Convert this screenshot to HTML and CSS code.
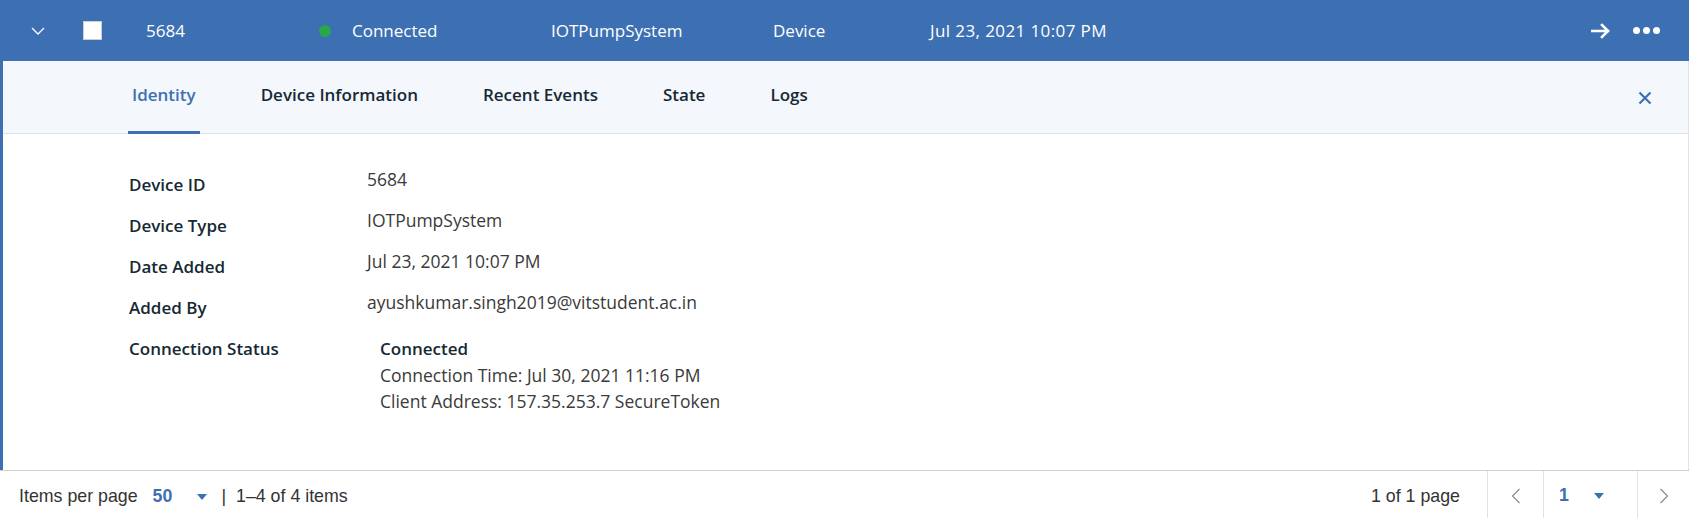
FILE: index.html
```html
<!DOCTYPE html>
<html lang="en">
<head>
<meta charset="utf-8">
<title>Device 5684</title>
<link rel="stylesheet" href="styles.css">
</head>
<body>
<div class="table">
  <div class="row-head">
    <div class="cell cell-expand">
      <svg class="chev" width="14" height="8" viewBox="0 0 14 8"><path d="M1 1l6 6 6-6" fill="none" stroke="#fff" stroke-width="1.3"/></svg>
    </div>
    <div class="cell cell-check"><span class="checkbox"></span></div>
    <div class="cell cell-id">5684</div>
    <div class="cell cell-status"><span class="dot"></span>Connected</div>
    <div class="cell cell-type">IOTPumpSystem</div>
    <div class="cell cell-class">Device</div>
    <div class="cell cell-date">Jul 23, 2021 10:07 PM</div>
    <div class="cell cell-actions">
      <svg class="arrow" width="20" height="16" viewBox="0 0 20 16"><path d="M1 8h16M11 2l6 6-6 6" fill="none" stroke="#fff" stroke-width="2.6" stroke-linecap="square"/></svg>
      <span class="dots"><i></i><i></i><i></i></span>
    </div>
  </div>
  <div class="expanded">
    <div class="tabs">
      <nav class="tab-list">
        <a class="tab tab-active">Identity</a>
        <a class="tab">Device Information</a>
        <a class="tab">Recent Events</a>
        <a class="tab">State</a>
        <a class="tab">Logs</a>
      </nav>
      <svg class="close" width="14" height="14" viewBox="0 0 14 14"><path d="M1.5 1.5l11 11M12.5 1.5l-11 11" stroke="#3d70b2" stroke-width="2.2"/></svg>
    </div>
    <div class="details">
      <div class="drow"><div class="dlabel">Device ID</div><div class="dvalue">5684</div></div>
      <div class="drow"><div class="dlabel">Device Type</div><div class="dvalue">IOTPumpSystem</div></div>
      <div class="drow"><div class="dlabel">Date Added</div><div class="dvalue">Jul 23, 2021 10:07 PM</div></div>
      <div class="drow"><div class="dlabel">Added By</div><div class="dvalue">ayushkumar.singh2019@vitstudent.ac.in</div></div>
      <div class="drow"><div class="dlabel">Connection Status</div>
        <div class="dvalue dvalue-status">
          <div class="status-main">Connected</div>
          <div>Connection Time: Jul 30, 2021 11:16 PM</div>
          <div>Client Address: 157.35.253.7 SecureToken</div>
        </div>
      </div>
    </div>
  </div>
  <div class="pager">
    <div class="pager-left">
      <span>Items per page</span>
      <span class="select-val">50</span>
      <span class="caret"></span>
      <span class="sep">|</span>
      <span>1–4 of 4 items</span>
    </div>
    <div class="pager-right">
      <span class="pages">1 of 1 page</span>
      <span class="pbtn pbtn-prev"><svg width="10" height="16" viewBox="0 0 10 16"><path d="M8.5 1L1.5 8l7 7" fill="none" stroke="#8c8c8c" stroke-width="1.2"/></svg></span>
      <span class="pbtn pbtn-page"><span class="select-val">1</span><span class="caret"></span></span>
      <span class="pbtn pbtn-next"><svg width="10" height="16" viewBox="0 0 10 16"><path d="M1.5 1l7 7-7 7" fill="none" stroke="#8c8c8c" stroke-width="1.2"/></svg></span>
    </div>
  </div>
</div>
</body>
</html>
```
FILE: styles.css
```css
* { box-sizing: border-box; }
html, body { margin: 0; padding: 0; background: #fff; }
body { font-family: "Open Sans", Roboto, "Liberation Sans", sans-serif; color: #152935; overflow: hidden; }

.table { width: 1689px; }

.row-head {
  height: 61px;
  background: #3d70b2;
  color: #fff;
  display: grid;
  grid-template-columns: 75px 71px 173px 232px 222px 157px 1fr auto;
  align-items: center;
  font-size: 17px;
}
.cell-expand { padding-left: 31px; display: flex; align-items: center; }
.cell-check { padding-left: 8px; display: flex; align-items: center; }
.checkbox { width: 19px; height: 19px; background: #fff; border: 1px solid #c7ced6; display: block; }
.cell-status { display: flex; align-items: center; }
.dot { width: 12px; height: 12px; border-radius: 50%; background: #2aa748; margin-right: 21px; }
.cell-date { letter-spacing: 0.4px; }
.cell-actions { display: flex; align-items: center; padding-right: 29px; gap: 22px; }
.arrow { display: block; }
.dots { display: flex; gap: 3px; }
.dots i { width: 7px; height: 7px; border-radius: 50%; background: #fff; display: block; }

.expanded {
  border-left: 3px solid #3d70b2;
  border-right: 1px solid #dfe3e6;
  height: 409px;
  display: flex;
  flex-direction: column;
}
.tabs {
  height: 73px;
  background: #f4f7fb;
  border-bottom: 1px solid #dfe3e6;
  display: flex;
  justify-content: space-between;
  align-items: stretch;
  padding-left: 125px;
  padding-right: 36px;
}
.tab-list { display: flex; gap: 57px; }
.tab {
  display: flex;
  align-items: center;
  padding: 0 4px 3px;
  font-size: 17px;
  font-weight: 600;
  color: #152935;
  border-bottom: 3px solid transparent;
  margin-bottom: -1px;
}
.tab-active { color: #3d70b2; border-bottom-color: #3d70b2; }
.close { align-self: center; margin-top: 2px; }

.details { padding: 31px 0 0 126px; flex: 1; }
.drow { display: grid; grid-template-columns: 238px 1fr; min-height: 41px; }
.dlabel { font-size: 17px; font-weight: 600; line-height: 24px; padding-top: 8px; color: #152935; }
.dvalue { font-size: 17.5px; line-height: 24px; padding-top: 2px; color: #3a3a3a; font-weight: 400; }
.dvalue-status { padding-top: 7px; padding-left: 13px; line-height: 26px; }
.status-main { font-weight: 600; font-size: 17px; color: #152935; }

.pager {
  height: 48px;
  border-top: 1px solid #cfcfcf;
  display: flex;
  justify-content: space-between;
  font-family: "Liberation Sans", Arial, sans-serif;
  font-size: 17.8px;
  color: #333;
}
.pager-left { display: flex; align-items: center; padding-left: 19px; padding-top: 4px; }
.select-val { color: #3d70b2; font-weight: 700; margin-left: 15px; }
.caret { width: 0; height: 0; border-left: 5.5px solid transparent; border-right: 5.5px solid transparent; border-top: 6px solid #3d70b2; margin-left: 25px; }
.sep { margin: 0 10px 0 14px; }
.pager-right { display: flex; align-items: stretch; }
.pages { display: flex; align-items: center; padding-right: 27px; padding-top: 4px; }
.pbtn { display: flex; align-items: center; justify-content: center; border-left: 1px solid #dfe3e6; padding-top: 2px; }
.pbtn-prev { width: 56px; }
.pbtn-page { width: 94px; justify-content: flex-start; padding-left: 15px; }
.pbtn-page .select-val { margin-left: 0; }
.pbtn-page .caret { margin-left: 25px; }
.pbtn-next { width: 52px; }
```
